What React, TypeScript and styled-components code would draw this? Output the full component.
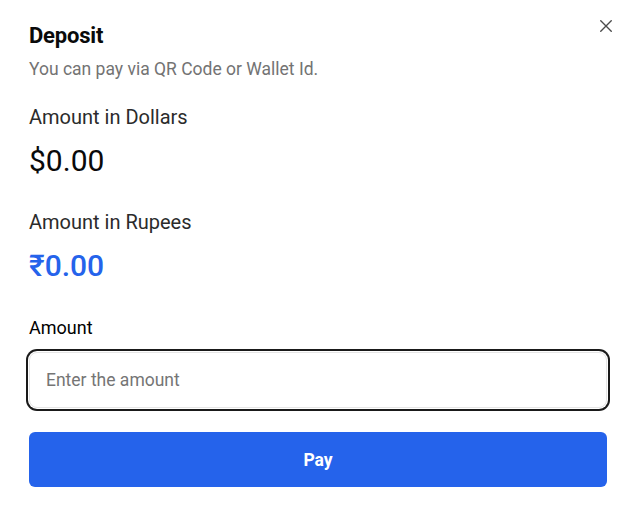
import React from "react";
import styled, { createGlobalStyle } from "styled-components";

const Global = createGlobalStyle`
  html, body { margin: 0; padding: 0; background: #ffffff; }
  body { font-family: Roboto, "Liberation Sans", Arial, sans-serif; }
  * { box-sizing: border-box; }
`;

const Dialog = styled.div`
  position: relative;
  width: 631px;
  height: 516px;
  padding: 22px 24px 0 29px;
  display: flex;
  flex-direction: column;
  background: #ffffff;
`;

const CloseButton = styled.button`
  position: absolute;
  top: 18px;
  right: 17px;
  width: 16px;
  height: 16px;
  padding: 0;
  border: none;
  background: transparent;
  display: flex;
  align-items: center;
  justify-content: center;
  cursor: pointer;
  color: #4b4b4b;
`;

const Title = styled.h2`
  margin: 0;
  font-size: 22px;
  line-height: 28px;
  font-weight: 700;
  color: #0a0a0a;
  letter-spacing: -0.2px;
`;

const Subtitle = styled.p`
  margin: 7px 0 0;
  font-size: 17.5px;
  line-height: 24px;
  color: #737373;
`;

const Stat = styled.div<{ $gap: number }>`
  margin-top: ${(p) => p.$gap}px;
  display: flex;
  flex-direction: column;
  gap: 12px;
`;

const StatLabel = styled.div`
  font-size: 20px;
  line-height: 28px;
  color: #2b2b2b;
`;

const StatValue = styled.div<{ $accent?: boolean }>`
  font-size: 30px;
  line-height: 36px;
  font-weight: ${(p) => (p.$accent ? 500 : 400)};
  color: ${(p) => (p.$accent ? "#2563eb" : "#0a0a0a")};
`;

const Field = styled.div`
  margin-top: 32px;
  display: flex;
  flex-direction: column;
  gap: 12px;
`;

const FieldLabel = styled.label`
  font-size: 18px;
  line-height: 24px;
  font-weight: 400;
  color: #000000;
`;

const Input = styled.input`
  width: 578px;
  height: 56px;
  padding: 0 16px;
  border: 1px solid #e5e5e5;
  border-radius: 8px;
  font-family: inherit;
  font-size: 17.5px;
  color: #0a0a0a;
  outline: none;
  box-shadow: 0 0 0 1px #ffffff, 0 0 0 3px #1a1a1a;
  &::placeholder { color: #757575; }
`;

const PayButton = styled.button`
  margin-top: 24px;
  width: 578px;
  height: 55px;
  border: none;
  border-radius: 6px;
  background: #2563eb;
  color: #ffffff;
  font-family: inherit;
  font-size: 17.5px;
  font-weight: 700;
  cursor: pointer;
`;

export default function App() {
  return (
    <>
      <Global />
      <Dialog>
        <CloseButton aria-label="Close">
          <svg width="12" height="12" viewBox="0 0 12 12" fill="none">
            <path d="M0.75 0.75 L11.25 11.25 M11.25 0.75 L0.75 11.25" stroke="currentColor" strokeWidth="1.4" strokeLinecap="round" />
          </svg>
        </CloseButton>
        <Title>Deposit</Title>
        <Subtitle>You can pay via QR Code or Wallet Id.</Subtitle>
        <Stat $gap={22}>
          <StatLabel>Amount in Dollars</StatLabel>
          <StatValue>$0.00</StatValue>
        </Stat>
        <Stat $gap={29}>
          <StatLabel>Amount in Rupees</StatLabel>
          <StatValue $accent>₹0.00</StatValue>
        </Stat>
        <Field>
          <FieldLabel>Amount</FieldLabel>
          <Input placeholder="Enter the amount" />
        </Field>
        <PayButton>Pay</PayButton>
      </Dialog>
    </>
  );
}
